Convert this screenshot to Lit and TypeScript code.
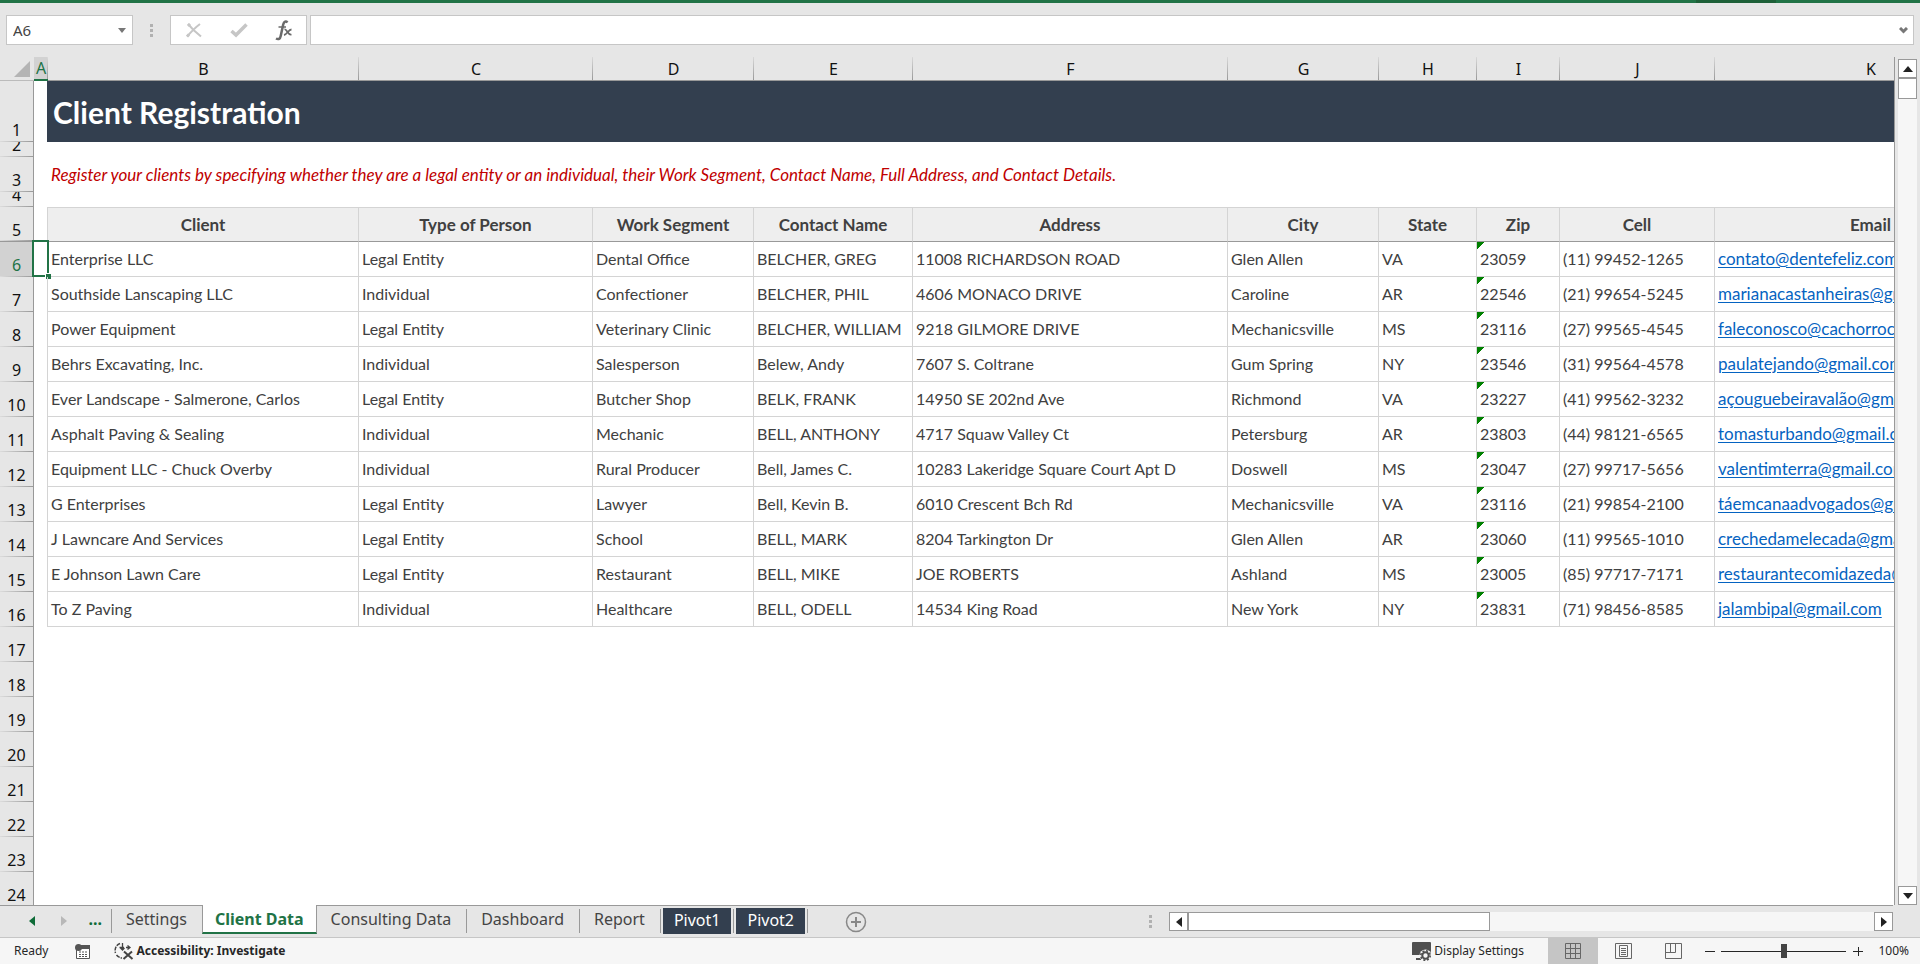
import { LitElement, html, css, svg, nothing } from 'lit';
import { customElement, state } from 'lit/decorators.js';
import { classMap } from 'lit/directives/class-map.js';

const COLUMNS: [string, number][] = [
  ['A', 14], ['B', 311], ['C', 234], ['D', 161], ['E', 159], ['F', 315],
  ['G', 151], ['H', 98], ['I', 83], ['J', 155], ['K', 312],
];
const ROW_HEADER_WIDTH = 34;
const TABLE_WIDTH = COLUMNS.reduce((sum, [, w]) => sum + w, ROW_HEADER_WIDTH);

const FIELDS = ['Client', 'Type of Person', 'Work Segment', 'Contact Name', 'Address', 'City', 'State', 'Zip', 'Cell', 'Email'];

const CLIENTS: string[][] = [
  ['Enterprise LLC', 'Legal Entity', 'Dental Office', 'BELCHER, GREG', '11008 RICHARDSON ROAD', 'Glen Allen', 'VA', '23059', '(11) 99452-1265', 'contato@dentefeliz.com'],
  ['Southside Lanscaping LLC', 'Individual', 'Confectioner', 'BELCHER, PHIL', '4606 MONACO DRIVE', 'Caroline', 'AR', '22546', '(21) 99654-5245', 'marianacastanheiras@gmail.com'],
  ['Power Equipment', 'Legal Entity', 'Veterinary Clinic', 'BELCHER, WILLIAM', '9218 GILMORE DRIVE', 'Mechanicsville', 'MS', '23116', '(27) 99565-4545', 'faleconosco@cachorrocao.com'],
  ['Behrs Excavating, Inc.', 'Individual', 'Salesperson', 'Belew, Andy', '7607 S. Coltrane', 'Gum Spring', 'NY', '23546', '(31) 99564-4578', 'paulatejando@gmail.com'],
  ['Ever Landscape - Salmerone, Carlos', 'Legal Entity', 'Butcher Shop', 'BELK, FRANK', '14950 SE 202nd Ave', 'Richmond', 'VA', '23227', '(41) 99562-3232', 'açouguebeiravalão@gmail.com'],
  ['Asphalt Paving & Sealing', 'Individual', 'Mechanic', 'BELL, ANTHONY', '4717 Squaw Valley Ct', 'Petersburg', 'AR', '23803', '(44) 98121-6565', 'tomasturbando@gmail.com'],
  ['Equipment LLC - Chuck Overby', 'Individual', 'Rural Producer', 'Bell, James C.', '10283 Lakeridge Square Court Apt D', 'Doswell', 'MS', '23047', '(27) 99717-5656', 'valentimterra@gmail.com'],
  ['G Enterprises', 'Legal Entity', 'Lawyer', 'Bell, Kevin B.', '6010 Crescent Bch Rd', 'Mechanicsville', 'VA', '23116', '(21) 99854-2100', 'táemcanaadvogados@gmail.com'],
  ['J Lawncare And Services', 'Legal Entity', 'School', 'BELL, MARK', '8204 Tarkington Dr', 'Glen Allen', 'AR', '23060', '(11) 99565-1010', 'crechedamelecada@gmail.com'],
  ['E Johnson Lawn Care', 'Legal Entity', 'Restaurant', 'BELL, MIKE', 'JOE ROBERTS', 'Ashland', 'MS', '23005', '(85) 97717-7171', 'restaurantecomidazeda@gmail.com'],
  ['To Z Paving', 'Individual', 'Healthcare', 'BELL, ODELL', '14534 King Road', 'New York', 'NY', '23831', '(71) 98456-8585', 'jalambipal@gmail.com'],
];
const EMPTY_ROWS = [17, 18, 19, 20, 21, 22, 23, 24];

const triangle = (points: string) => svg`<polygon points=${points} fill="currentColor"/>`;

@customElement('formula-bar')
class FormulaBar extends LitElement {
  static styles = css`
    :host { display: flex; align-items: stretch; height: 30px; padding: 12px 6px 12px 6px; font-family: "Noto Sans", sans-serif; }
    * { box-sizing: border-box; }
    .box { display: flex; align-items: center; background: #fff; border: 1px solid #c6c6c6; }
    .name { width: 127px; }
    input { border: 0; outline: 0; background: none; min-width: 0; flex: 1; font: 15px "Noto Sans", sans-serif; color: #444; padding: 0 0 0 6px; }
    button { display: grid; place-items: center; padding: 0; border: 0; background: none; color: #777; }
    .drop { width: 20px; height: 28px; }
    .grip { display: grid; align-content: center; justify-content: center; gap: 2px; width: 37px; }
    .grip i { width: 3px; height: 3px; background: #b1b1b1; }
    .tools { width: 137px; }
    .tools button { width: 45px; height: 28px; }
    .entry { flex: 1; margin-left: 3px; }
  `;
  render() {
    return html`
      <div class="box name">
        <input aria-label="Name box" value="A6">
        <button class="drop" aria-label="Named ranges"><svg width="8" height="5">${triangle('0,0 8,0 4,5')}</svg></button>
      </div>
      <div class="grip"><i></i><i></i><i></i></div>
      <div class="box tools">
        <button aria-label="Cancel"><svg width="16" height="15" viewBox="0 0 16 15" fill="none" stroke="#c6c6c6" stroke-width="2"><path d="M2 1 7.500 7 15 13.500M14 1C10 4 5 9 1 13.500"/><path d="M1 13.500 3 11.500M2 1 4 3" stroke-width="3"/></svg></button>
        <button aria-label="Enter"><svg width="18" height="15" viewBox="0 0 18 15" fill="none" stroke="#c6c6c6" stroke-width="3.500"><path d="M1.500 8 6 12 16.500 1.500"/></svg></button>
        <button aria-label="Insert function"><svg width="18" height="21" viewBox="0 0 18 21" fill="none" stroke="#6a6a6a"><path d="M12.500 2.500C11 .8 9 1.300 8.200 4.500L5.700 16C5.200 18.800 3.500 19.800 1 18.500" stroke-width="2.500"/><path d="M3.500 7H11" stroke-width="1.500"/><path d="M9.500 9.500C12 8.500 12.500 15.500 16.500 14.500M16.500 9.500C13.500 9.500 12 14.500 9 15" stroke-width="1.800"/></svg></button>
      </div>
      <div class="box entry">
        <input aria-label="Formula">
        <button class="drop" aria-label="Expand formula bar"><svg width="9" height="7" fill="none" stroke="currentColor" stroke-width="3"><path d="M1 1 4.500 4.500 8 1"/></svg></button>
      </div>`;
  }
}

@customElement('sheet-grid')
class SheetGrid extends LitElement {
  static styles = css`
    :host { display: flex; min-height: 0; font-family: Lato, sans-serif; color: #404040; }
    * { box-sizing: border-box; }
    .view { flex: 1; min-width: 0; overflow: hidden; background: linear-gradient(#e6e6e6 24px, #fff 24px); border-right: 1px solid #999; }
    table { table-layout: fixed; border-collapse: separate; border-spacing: 0; font-size: 16px; white-space: nowrap; }
    th, td { padding: 0; }
    .cols th { height: 24px; background: linear-gradient(#d9d9d9, #999) right / 1px 100% no-repeat, #e6e6e6; border-bottom: 1px solid #999; font: 16px/22px "Noto Sans", sans-serif; color: #111; }
    .cols .on { background-color: #d2d2d2; color: #217346; border-bottom: 2px solid #217346; }
    .cols .corner { background: #e6e6e6; border-bottom: 1px solid #bbb; }
    .corner svg { display: block; margin: 0 0 0 14px; }
    .num { background: linear-gradient(90deg, #dcdcdc, #999) bottom / 100% 1px no-repeat, #e6e6e6; border-right: 1px solid #999; color: #111; font: 16px/22px "Noto Sans", sans-serif; }
    .num div { display: flex; justify-content: center; align-items: flex-end; height: 34px; margin-bottom: 1px; overflow: hidden; }
    .thin .num div { height: 14px; }
    .tall .num div { height: 60px; }
    .tall td { border-right: 1px solid #333f4f; }
    .on.num { background-color: #d2d2d2; color: #217346; }
    .title { background: #333f4f; color: #fff; font-size: 30px; font-weight: 700; text-align: left; padding-left: 5px; }
    .note { color: #c00000; font-size: 17px; font-style: italic; padding-left: 3px; }
    .fields th { font-size: 17px; }
    .fields td, .fields .num { border-bottom: 1px solid #999; }
    .fields .num { font-size: 16px; }
    .fields .num div { margin: 0; }
    .field { background: #eee; border-right: 1px solid #d4d4d4; border-top: 1px solid #d4d4d4; border-bottom: 1px solid #999; }
    .edge { border-right: 1px solid #d4d4d4; }
    .data { border-right: 1px solid #d4d4d4; border-bottom: 1px solid #d4d4d4; padding: 0 0 2px 3px; }
    .flag { background: linear-gradient(135deg, #008000 5px, transparent 5px) 0 0 / 8px 8px no-repeat; }
    a { color: #0563c1; font-size: 17px; line-height: 19px; text-underline-offset: 2px; }
    .cell-a { position: relative; border-right: 1px solid #d4d4d4; }
    .select { position: absolute; inset: -2px -2px 0 -2px; border: 2px solid #217346; }
    .select i { position: absolute; right: -4px; bottom: -4px; width: 6px; height: 6px; background: #217346; border: 1px solid #fff; border-width: 1px 0 0 1px; }
    .bar { display: flex; flex-direction: column; width: 25px; padding: 2px 3px 0 3px; background: #e6e6e6; }
    .bar button { display: grid; place-items: center; width: 19px; height: 19px; padding: 0; border: 1px solid #999; background: #fff; color: #222; }
    .track { flex: 1; background: #f6f6f6; }
    .thumb { height: 21px; border: 1px solid #999; background: #fff; }
  `;
  render() {
    return html`
      <div class="view">
        <table style="width:${TABLE_WIDTH}px">
          <colgroup>
            <col style="width:${ROW_HEADER_WIDTH}px">
            ${COLUMNS.map(([, w]) => html`<col style="width:${w}px">`)}
          </colgroup>
          <tr class="cols">
            <th class="corner"><svg width="16" height="16"><polygon points="16,0 16,16 0,16" fill="#b4b4b4"/></svg></th>
            ${COLUMNS.map(([c]) => html`<th scope="col" class=${classMap({ on: c === 'A' })}>${c}</th>`)}
          </tr>
          <tr class="tall">${this.num(1)}<td></td><th class="title" colspan="10">Client Registration</th></tr>
          <tr class="thin">${this.num(2)}<td colspan="11"></td></tr>
          <tr>${this.num(3)}<td></td><td class="note" colspan="10">Register your clients by specifying whether they are a legal entity or an individual, their Work Segment, Contact Name, Full Address, and Contact Details.</td></tr>
          <tr class="thin">${this.num(4)}<td colspan="11"></td></tr>
          <tr class="fields">${this.num(5)}<td class="edge"></td>${FIELDS.map(f => html`<th scope="col" class="field">${f}</th>`)}</tr>
          ${CLIENTS.map((client, i) => html`
            <tr>
              ${this.num(i + 6, i === 0)}
              <td class="cell-a">${i === 0 ? html`<div class="select"><i></i></div>` : nothing}</td>
              ${client.map((v, c) => html`<td class=${classMap({ data: true, flag: c === 7 })}>${c === 9 ? html`<a href="mailto:${v}">${v}</a>` : v}</td>`)}
            </tr>`)}
          ${EMPTY_ROWS.map(n => html`<tr>${this.num(n)}<td colspan="11"></td></tr>`)}
        </table>
      </div>
      <div class="bar">
        <button aria-label="Scroll up"><svg width="10" height="6">${triangle('5,0 10,6 0,6')}</svg></button>
        <div class="thumb"></div>
        <div class="track"></div>
        <button aria-label="Scroll down"><svg width="10" height="6">${triangle('0,0 10,0 5,6')}</svg></button>
      </div>`;
  }
  private num(n: number, on = false) {
    return html`<th scope="row" class=${classMap({ num: true, on })}><div>${n}</div></th>`;
  }
}

@customElement('sheet-tabs')
class SheetTabs extends LitElement {
  static styles = css`
    :host { display: flex; justify-content: space-between; height: 33px; background: #e6e6e6; border-bottom: 1px solid #c6c6c6; box-sizing: border-box; font-family: "Noto Sans", sans-serif; }
    * { box-sizing: border-box; }
    .left { display: flex; flex: 1; border-top: 1px solid #999; }
    button { padding: 0; border: 0; background: none; font: 16px/22px "Noto Sans", sans-serif; color: #444; }
    .arrow { display: grid; place-items: center; width: 32px; height: 30px; color: #0e6b38; }
    .nav { display: flex; width: 111px; padding-left: 16px; }
    .off { color: #b8b8b8; }
    .more { width: 32px; height: 26px; color: #0e6b38; font-weight: 700; }
    .tab { display: flex; height: 28px; }
    .tab button { padding: 0 15px 2px 14px; }
    .tab::before { content: ""; width: 1px; height: 24px; margin-top: 3px; background: #999; }
    .active { border: solid #999; border-width: 0 1px; background: #fff; margin-top: -1px; height: 29px; border-bottom: 2px solid #217346; }
    .active button { color: #217346; font-weight: 700; padding: 0 12px; }
    .active::before, .active + .tab::before { display: none; }
    .dark button { margin: 2px 2px 0; padding: 0 11px 3px; background: #333f4f; color: #fff; height: 26px; }
    .end { width: 1px; height: 24px; margin-top: 3px; background: #999; }
    .add { display: grid; place-items: center; margin-left: 37px; width: 22px; height: 32px; }
    .right { display: flex; align-items: center; border-top: 1px solid #999; flex: 0 1 744px; }
    .grip { display: grid; gap: 2px; margin-right: 17px; }
    .grip i { width: 3px; height: 3px; background: #b1b1b1; }
    .scroll { display: flex; flex: 1; height: 19px; background: #f6f6f6; }
    .scroll button { display: grid; place-items: center; width: 19px; height: 19px; border: 1px solid #999; background: #fff; color: #222; }
    .thumb { width: 302px; border: 1px solid #999; background: #fff; }
    .gap { flex: 1; }
    .tail { width: 27px; }
  `;
  @state() private tabs = ['Settings', 'Client Data', 'Consulting Data', 'Dashboard', 'Report', 'Pivot1', 'Pivot2'];
  render() {
    return html`
      <div class="left">
        <div class="nav">
          <button class="arrow" aria-label="Previous sheets"><svg width="6" height="10">${triangle('6,0 6,10 0,5')}</svg></button>
          <button class="arrow off" aria-label="Next sheets"><svg width="6" height="10">${triangle('0,0 0,10 6,5')}</svg></button>
          <button class="more">...</button>
        </div>
        ${this.tabs.map(t => html`<div class=${classMap({ tab: true, active: t === 'Client Data', dark: t.startsWith('Pivot') })}><button>${t}</button></div>`)}
        <div class="end"></div>
        <button class="add" aria-label="New sheet"><svg width="22" height="22" fill="none" stroke="#888"><circle cx="11" cy="11" r="9.500" stroke-width="1.500"/><path d="M6 11H16M11 6V16" stroke-width="2"/></svg></button>
      </div>
      <div class="right">
        <div class="grip"><i></i><i></i><i></i></div>
        <div class="scroll">
          <button aria-label="Scroll left"><svg width="6" height="10">${triangle('6,0 6,10 0,5')}</svg></button>
          <div class="thumb"></div>
          <div class="gap"></div>
          <button aria-label="Scroll right"><svg width="6" height="10">${triangle('0,0 0,10 6,5')}</svg></button>
        </div>
      </div>
      <div class="tail"></div>`;
  }
}

@customElement('status-bar')
class StatusBar extends LitElement {
  static styles = css`
    :host { display: flex; align-items: center; justify-content: space-between; height: 26px; margin-bottom: 2px; padding: 0 11px 0 14px; background: #f6f6f6; font: 12px/16px "Noto Sans", sans-serif; color: #262626; }
    * { box-sizing: border-box; }
    svg { display: block; }
    .group { display: flex; align-items: center; height: 26px; }
    button { display: flex; align-items: center; justify-content: center; gap: 2px; height: 26px; padding: 0; border: 0; background: none; font: inherit; color: inherit; }
    .record { margin: 0 24px 0 27px; }
    .strong { font-weight: 700; }
    .view { width: 50px; color: #666; }
    .on { background: #c5c5c5; }
    .display { margin-right: 24px; }
    .step { width: 23px; }
    input { appearance: none; width: 125px; height: 16px; margin: 0; background: linear-gradient(#262626, #262626) center / 100% 1px no-repeat; }
    input::-webkit-slider-thumb { appearance: none; width: 6px; height: 14px; background: #444; }
    .percent { width: 40px; text-align: right; }
  `;
  render() {
    return html`
      <div class="group">
        <span>Ready</span>
        <button class="record" aria-label="Record macro">
          <svg width="15" height="15" viewBox="0 0 15 15"><path d="M1.500 6V14.500H14.500V5" fill="#fff" stroke="#555"/><path d="M5 1H15V5H5Z" fill="#555"/><circle cx="3.500" cy="3.500" r="3.500" fill="#555"/><path d="M4 8H6M7 8H9M10 8H12M4 10.500H6M7 10.500H9M10 10.500H12M4 12.500H6M7 12.500H9M10 12.500H12" stroke="#555"/></svg>
        </button>
        <button class="strong">
          <svg width="20" height="18" viewBox="0 0 20 18" fill="none" stroke="#444"><path d="M6 1.500A7.500 7.500 0 0 0 1.500 11M2.500 13A8 8 0 0 0 8 16" stroke-width="1.500" stroke-dasharray="4 1"/><path d="M5.500 5.500H10M12 5.500H16M13.500 3.500 16 5.500 13.500 7.500M8.500 1V8M6.500 6 8.500 8 10.500 6" stroke-width="1.300"/><path d="M10 9.500 18.500 17M18 9.500 9.500 17" stroke-width="2"/></svg>
          Accessibility: Investigate
        </button>
      </div>
      <div class="group">
        <button class="display">
          <svg width="20" height="19" viewBox="0 0 20 19"><path d="M1 0H18Q19 0 19 1V13H0V1Q0 0 1 0ZM4 16H9V18H4Z" fill="#505050"/><circle cx="13.500" cy="13.500" r="6" fill="#f6f6f6"/><circle cx="13.500" cy="13.500" r="3.200" fill="none" stroke="#505050" stroke-width="2"/><circle cx="13.500" cy="13.500" r="4.700" fill="none" stroke="#505050" stroke-width="1.600" stroke-dasharray="2 1.690"/></svg>
          Display Settings
        </button>
        <button class="view on" aria-label="Normal view"><svg width="16" height="16" fill="none" stroke="currentColor"><path d="M.5.5H15.500V15.500H.5ZM5.500.5V15.500M10.500.5V15.500M.5 5.500H15.500M.5 10.500H15.500"/></svg></button>
        <button class="view" aria-label="Page layout"><svg width="17" height="16" fill="none" stroke="currentColor"><path d="M.5.5H16.500V15.500H.5ZM4.500 2.500H12.500V13.500H4.500ZM6 5.500H11M6 7.500H11M6 9.500H11M6 11.500H11"/></svg></button>
        <button class="view" aria-label="Page break preview"><svg width="17" height="16" fill="none" stroke="currentColor"><path d="M.5.5H16.500V15.500H.5ZM.5 9.500H10.500V.5M5.500.5V9.500"/></svg></button>
        <button class="step" aria-label="Zoom out"><svg width="10" height="10" stroke="#262626"><path d="M0 5.500H10"/></svg></button>
        <input type="range" aria-label="Zoom" min="0" max="100" value="50">
        <button class="step" aria-label="Zoom in"><svg width="10" height="10" stroke="#262626"><path d="M0 5.500H10M5.500 1V10"/></svg></button>
        <span class="percent">100%</span>
      </div>`;
  }
}

@customElement('app-root')
class AppRoot extends LitElement {
  static styles = css`
    :host { display: flex; flex-direction: column; height: 100vh; background: #fff; }
    .accent { height: 3px; background: linear-gradient(#1e6038, #1e6038) calc(100% - 144px) 0 / 80px 3px no-repeat, #217346; }
    formula-bar { background: #e6e6e6; }
    sheet-grid { flex: 1; }
  `;
  render() {
    return html`
      <div class="accent"></div>
      <formula-bar></formula-bar>
      <sheet-grid></sheet-grid>
      <sheet-tabs></sheet-tabs>
      <status-bar></status-bar>`;
  }
}
